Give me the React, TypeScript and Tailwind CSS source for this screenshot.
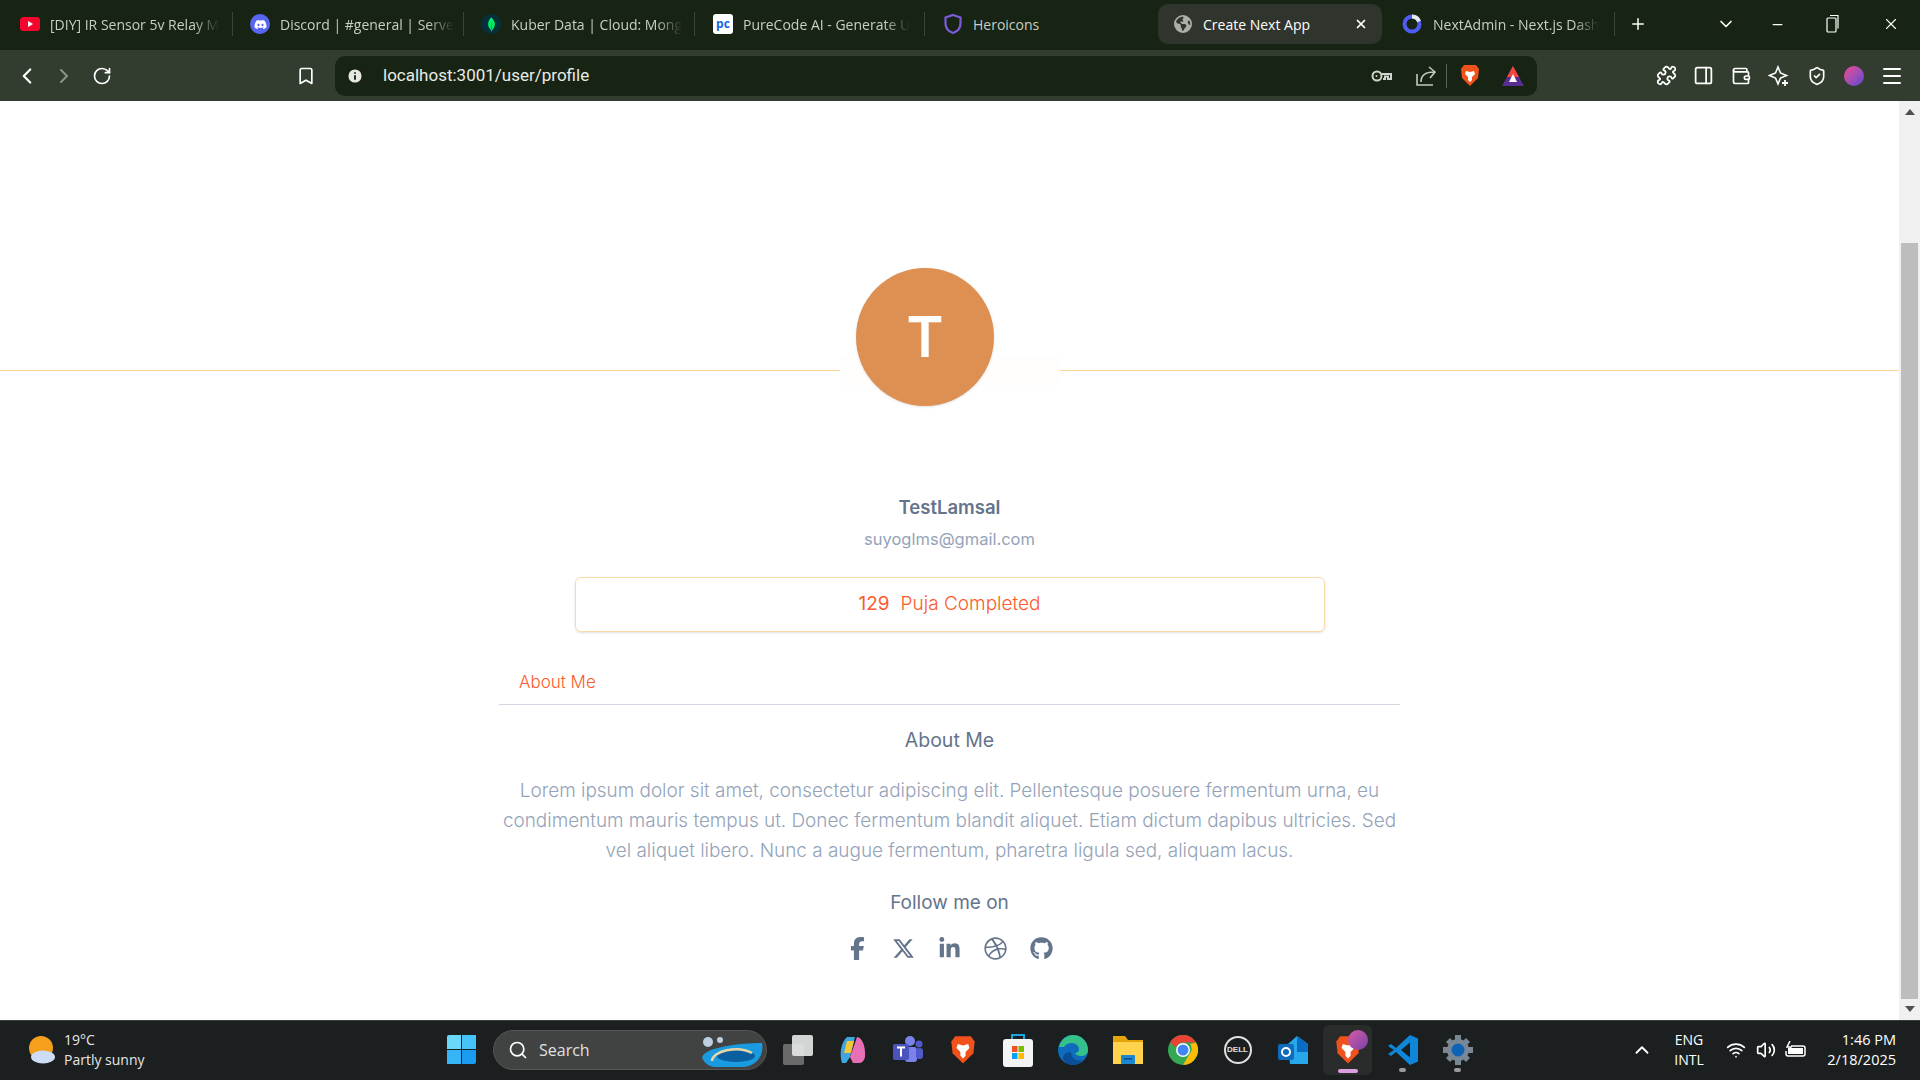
import React from "react";
import {
  ChevronLeft,
  ChevronRight,
  RotateCw,
  Bookmark,
  Puzzle,
  PanelRight,
  Wallet,
  ShieldCheck,
  Menu,
  Plus,
  ChevronDown,
  Minus,
  X,
  Search,
  ChevronUp,
  Wifi,
  Volume2,
  Info,
} from "lucide-react";
import { FaDiscord, FaFacebookF, FaGithub, FaLinkedinIn, FaDribbble, FaXTwitter, FaEarthAmericas } from "react-icons/fa6";
import { SiMongodb } from "react-icons/si";

const Youtube = () => (
  <svg width="20" height="14" viewBox="0 0 20 14">
    <rect width="20" height="14" rx="3.500" fill="#f4072f" />
    <path d="M8 4l5 3-5 3z" fill="#fff" />
  </svg>
);

const Discord = () => (
  <div className="w-[20px] h-[20px] rounded-full bg-[#5865f2] flex items-center justify-center">
    <FaDiscord size={13} className="text-white" />
  </div>
);

const Mongo = () => (
  <div className="w-[20px] h-[20px] rounded-full bg-[#03303a] flex items-center justify-center">
    <SiMongodb size={15} className="text-[#00ed64]" />
  </div>
);

const PureCode = () => (
  <div className="w-[20px] h-[20px] rounded-[3px] bg-white flex items-center justify-center text-[12px] leading-none font-bold text-[#1565e0]">
    pc
  </div>
);

const HeroShield = () => (
  <svg width="20" height="22" viewBox="0 0 20 22" fill="none">
    <path d="M10 2l7.500 2.500v6c0 4.500-3 8-7.500 9.500-4.500-1.500-7.500-5-7.500-9.500v-6z" stroke="#7c5cdb" strokeWidth="2.200" />
  </svg>
);

const NextRing = () => (
  <svg width="20" height="20" viewBox="0 0 20 20" fill="none">
    <circle cx="10" cy="10" r="7.500" stroke="#4f5bf0" strokeWidth="4" />
    <path d="M10 2.500a7.500 7.500 0 0 1 7 5" stroke="#e8e8e8" strokeWidth="4" />
  </svg>
);

const BraveLion = ({ size = 20 }: { size?: number }) => (
  <svg width={size} height={size * 1.15} viewBox="0 0 20 23">
    <path d="M4 1h12l3 4-1 9-8 8-8-8-1-9z" fill="#f1511b" />
    <path d="M6 7l4 1 4-1 1 3-3 3v3l-2 2-2-2v-3L5 10z" fill="#fff" />
  </svg>
);

const KeyIcon = () => (
  <svg width="22" height="14" viewBox="0 0 22 14" fill="none" stroke="#d0d4ce" strokeWidth="2">
    <circle cx="6" cy="7" r="4.500" />
    <path d="M10.500 5H20v5h-3V7.500h-3V10h-2" />
    <circle cx="5.500" cy="7" r="1" fill="#d0d4ce" strokeWidth="0" />
  </svg>
);

const ShareIcon = () => (
  <svg width="22" height="22" viewBox="0 0 22 22" fill="none" stroke="#c4c9c2" strokeWidth="1.600">
    <path d="M2 9v11h16" />
    <path d="M6 17c0-6 4-10 13-10M14 2l6 5-5 6" />
  </svg>
);

const StarIcon = () => (
  <svg width="22" height="22" viewBox="0 0 22 22" fill="none" stroke="#fff" strokeWidth="1.600">
    <path d="M10 2l2.500 6 6 2.500-6 2.500L10 19l-2.500-6-6-2.500 6-2.500z" />
    <path d="M17 15v6M14 18h6" strokeWidth="1.800" />
  </svg>
);

const RestoreIcon = () => (
  <svg width="14" height="20" viewBox="0 0 14 20" fill="none" stroke="#fff" strokeWidth="1.200">
    <rect x="1" y="4" width="9" height="14" rx="1" />
    <path d="M4 1.500h8v13" />
  </svg>
);

const BatteryIcon = () => (
  <svg width="22" height="18" viewBox="0 0 22 18" fill="none" stroke="#fff" strokeWidth="1.500">
    <path d="M6 5h12a2 2 0 0 1 2 2v6a2 2 0 0 1-2 2H3a2 2 0 0 1-2-2v-3" />
    <rect x="3" y="7" width="15" height="6" fill="#fff" strokeWidth="0" />
    <path d="M5 0L2 6h4l-2 4" strokeWidth="1.500" />
  </svg>
);

const tabs = [
  { title: "[DIY] IR Sensor 5v Relay M", icon: <Youtube />, pad: "pl-[20px] w-[233px]" },
  { title: "Discord | #general | Serve", icon: <Discord />, pad: "pl-[17px] w-[231px]" },
  { title: "Kuber Data | Cloud: Mong", icon: <Mongo />, pad: "pl-[17px] w-[231px]" },
  { title: "PureCode AI - Generate U", icon: <PureCode />, pad: "pl-[18px] w-[230px]" },
];

const SocialIcons = [FaFacebookF, FaXTwitter, FaLinkedinIn, FaDribbble, FaGithub];

const TabBar = () => (
  <div className="h-[50px] pb-[2px] bg-[#172413] flex items-center text-[14px] text-[#c8cdc6] shrink-0">
    {tabs.map((t) => (
      <div key={t.title} className={`${t.pad} flex items-center gap-[10px] h-[24px] border-r border-[#3a4537] shrink-0`}>
        <span className="w-[20px] flex justify-center shrink-0">{t.icon}</span>
        <span className="whitespace-nowrap [mask-image:linear-gradient(to_right,black_85%,transparent)]">{t.title}</span>
      </div>
    ))}
    <div className="pl-[18px] w-[233px] flex items-center gap-[10px] shrink-0">
      <HeroShield />
      <span>Heroicons</span>
    </div>
    <div className="w-[224px] h-[40px] rounded-[10px] bg-[#2f352d] flex items-center pl-[16px] pr-[14px] gap-[11px] text-white shrink-0">
      <FaEarthAmericas size={18} className="text-[#aab0a8]" />
      <span>Create Next App</span>
      <X size={14} strokeWidth={3} className="ml-auto" />
    </div>
    <div className="ml-[20px] flex items-center gap-[11px] w-[213px] h-[24px] border-r border-[#3a4537] shrink-0">
      <NextRing />
      <span className="whitespace-nowrap [mask-image:linear-gradient(to_right,black_85%,transparent)]">NextAdmin - Next.js Dash</span>
    </div>
    <Plus size={18} className="ml-[14px] text-white" />
    <ChevronDown size={20} className="ml-[69px] text-white" />
    <Minus size={15} className="ml-[34px] text-white" />
    <span className="ml-[41px]"><RestoreIcon /></span>
    <X size={18} strokeWidth={1.500} className="ml-[42px] text-white" />
  </div>
);

const ToolBar = () => (
  <div className="h-[51px] bg-[#323d2f] flex items-center shrink-0 text-white">
    <ChevronLeft size={26} strokeWidth={2} className="ml-[14px]" />
    <ChevronRight size={24} strokeWidth={2} className="ml-[12px] text-[#8b9388]" />
    <RotateCw size={20} strokeWidth={2} className="ml-[16px]" />
    <Bookmark size={20} strokeWidth={2} className="ml-[184px]" />
    <div className="ml-[19px] w-[1202px] h-[40px] rounded-[10px] bg-[#172413] flex items-center pl-[11px] shrink-0">
      <Info size={18} fill="#e8e8e2" stroke="#172413" strokeWidth={2.500} />
      <span className="ml-[19px] text-[17px] text-[#e8ebe6] font-['Roboto',sans-serif]">localhost:3001/user/profile</span>
      <span className="ml-auto"><KeyIcon /></span>
      <span className="ml-[22px]"><ShareIcon /></span>
      <div className="ml-[9px] w-[1px] h-[24px] bg-[#59625a]" />
      <span className="ml-[13px]"><BraveLion /></span>
      <svg className="ml-[22px] mr-[13px]" width="22" height="20" viewBox="0 0 22 20">
        <path d="M11 0l11 20H0z" fill="#5a2d91" />
        <path d="M11 0l6 11H5z" fill="#f0463c" />
        <path d="M11 8l4 8H7z" fill="#fff" />
      </svg>
    </div>
    <Puzzle size={21} className="ml-[119px]" />
    <PanelRight size={21} className="ml-[16px]" />
    <Wallet size={20} className="ml-[17px]" />
    <span className="ml-[17px]"><StarIcon /></span>
    <ShieldCheck size={20} className="ml-[17px]" />
    <div className="ml-[17px] w-[20px] h-[20px] rounded-full bg-gradient-to-br from-[#f23f8d] to-[#5b3fd1]" />
    <Menu size={24} className="ml-[16px]" />
  </div>
);

const Scrollbar = () => (
  <div className="w-[21px] bg-[#f0f0f0] flex flex-col items-center shrink-0">
    <svg className="mt-[8px]" width="10" height="6" viewBox="0 0 10 6"><path d="M5 0l5 6H0z" fill="#505050" /></svg>
    <div className="mt-[128px] w-[17px] h-[756px] bg-[#bdbdbd]" />
    <svg className="mt-[7px]" width="10" height="6" viewBox="0 0 10 6"><path d="M5 6L0 0h10z" fill="#505050" /></svg>
  </div>
);

const Profile = () => (
  <div className="flex-1 bg-white relative font-['Inter',sans-serif] flex flex-col items-center">
    <div className="w-full h-[270px] border-b border-[#fdd69e] shrink-0" />
    <div className="absolute left-[840px] top-[255px] w-[220px] h-[30px] bg-[#fffefd]" />
    <div className="absolute left-[856px] top-[167px] w-[138px] h-[138px] rounded-full bg-[#de8f52] shadow-sm flex items-center justify-center text-white text-[56px] font-semibold">
      T
    </div>
    <h2 className="mt-[122px] text-[18.500px] leading-[28px] font-semibold text-[#64748b]">TestLamsal</h2>
    <p className="mt-[4px] text-[16.500px] leading-[28px] font-normal text-[#94a3b8]">suyoglms@gmail.com</p>
    <div className="mt-[24px] w-[750px] h-[55px] rounded-[6px] border border-[#fdd9a8] shadow-sm flex items-center justify-center gap-[11px] text-[19px] text-[#fb5a2d] font-light">
      <span className="font-normal">129</span>
      <span>Puja Completed</span>
    </div>
    <div className="mt-[35px] w-[901px] border-b border-[#d5d8e3] h-[38px] pt-[1px] pl-[20px] text-[17px] leading-[28px] text-[#fb5a2d] font-light">
      About Me
    </div>
    <h3 className="mt-[21px] text-[19.500px] leading-[28px] font-normal text-[#64748b]">About Me</h3>
    <p className="mt-[22px] w-[901px] text-center text-[18.930px] leading-[30px] text-[#94a3b8] font-light">
      Lorem ipsum dolor sit amet, consectetur adipiscing elit. Pellentesque posuere fermentum urna, eu condimentum mauris tempus ut. Donec fermentum blandit aliquet. Etiam dictum dapibus ultricies. Sed vel aliquet libero. Nunc a augue fermentum, pharetra ligula sed, aliquam lacus.
    </p>
    <p className="mt-[23px] text-[19px] leading-[28px] font-normal text-[#64748b]">Follow me on</p>
    <div className="mt-[19px] flex gap-[22px] text-[#64748b]">
      {SocialIcons.map((Icon, i) => (
        <span key={i} className="w-[24px] h-[24px] flex items-center justify-center">
          <Icon size={23} />
        </span>
      ))}
    </div>
  </div>
);

const appIcons: React.ReactNode[] = [
  <div key="tv" className="relative w-[30px] h-[30px]">
    <div className="absolute left-0 bottom-0 w-[21px] h-[21px] rounded-[2px] bg-[#6a6a6a]" />
    <div className="absolute right-0 top-0 w-[21px] h-[21px] rounded-[2px] bg-[#e8e8e8]/90" />
  </div>,
  <svg key="copilot" width="30" height="32" viewBox="0 0 30 32">
    <path d="M9 3h8l-5 20-4 6H4C1 20 3 8 9 3z" fill="#3fa6e0" />
    <path d="M19 3c5 0 9 10 8 20-1 4-3 6-6 6h-6l-3-6 6-17z" fill="#e86fb5" />
    <path d="M9 7h7l-3 12H6z" fill="#f2c83a" />
  </svg>,
  <svg key="teams" width="32" height="30" viewBox="0 0 32 30">
    <circle cx="18" cy="6" r="5" fill="#7b83eb" /><circle cx="27" cy="9" r="3.500" fill="#5059c9" />
    <rect x="13" y="12" width="12" height="15" rx="3" fill="#7b83eb" /><rect x="24" y="13" width="7" height="11" rx="3" fill="#5059c9" />
    <rect x="1" y="9" width="16" height="16" rx="2" fill="#4b53bc" />
    <path d="M5 12.500h8M9 12.500v9" stroke="#fff" strokeWidth="2" />
  </svg>,
  <BraveLion key="brave" size={26} />,
  <svg key="store" width="30" height="34" viewBox="0 0 30 34">
    <path d="M9 7V2h12v5" fill="none" stroke="#1aa5e6" strokeWidth="2" />
    <rect y="6" width="30" height="28" rx="3" fill="#f4f4f4" />
    <rect x="9" y="13" width="5.500" height="6" fill="#f25022" /><rect x="15.500" y="13" width="5.500" height="6" fill="#7fba00" />
    <rect x="9" y="20" width="5.500" height="6" fill="#00a4ef" /><rect x="15.500" y="20" width="5.500" height="6" fill="#ffb900" />
  </svg>,
  <svg key="edge" width="30" height="30" viewBox="0 0 30 30">
    <circle cx="15" cy="15" r="15" fill="#0f6cbd" />
    <path d="M1 12C3 4 9 0 15 0c8 0 15 6 15 15 0 4-3 6-7 6-3 0-5-1-6-3 4 0 5-4 3-7-3-4-11-4-14 1" fill="#35c18a" />
    <path d="M13 17c0 6 5 10 12 8-3 3-6 5-10 5-4 0-8-2-10-6 0-4 2-7 8-7z" fill="#0a4f96" />
  </svg>,
  <svg key="files" width="30" height="30" viewBox="0 0 30 30">
    <path d="M0 1h12l3 4h15v24H0z" fill="#e5a50a" />
    <rect y="7" width="30" height="22" fill="#ffd34e" />
    <rect x="8" y="20" width="14" height="9" rx="1" fill="#1c86d1" />
    <rect x="11" y="23" width="8" height="1.500" fill="#0b4f86" />
  </svg>,
  <svg key="chrome" width="30" height="30" viewBox="0 0 30 30">
    <circle cx="15" cy="15" r="15" fill="#34a853" />
    <path d="M15 0a15 15 0 0 1 13 7.500H15a7.500 7.500 0 0 0-7 5L2 7.500A15 15 0 0 1 15 0z" fill="#ea4335" />
    <path d="M28 7.500A15 15 0 0 1 15 30l6.500-11A7.500 7.500 0 0 0 22 9z" fill="#fbbc05" />
    <circle cx="15" cy="15" r="7" fill="#fff" /><circle cx="15" cy="15" r="5.500" fill="#4285f4" />
  </svg>,
  <div key="dell" className="w-[28px] h-[28px] rounded-full border-2 border-[#e0e0e0] flex items-center justify-center text-[8px] font-bold text-[#e0e0e0] font-['Liberation_Sans',sans-serif]">
    DELL
  </div>,
  <svg key="outlook" width="30" height="30" viewBox="0 0 30 30">
    <path d="M10 9l9-8 11 8v20H12z" fill="#28a8ea" /><path d="M19 1l11 8v8H19z" fill="#0a6cc4" />
    <rect y="9" width="16" height="16" rx="2" fill="#0f6cbd" />
    <circle cx="8" cy="17" r="4" fill="none" stroke="#fff" strokeWidth="2" />
  </svg>,
  <div key="active" className="relative w-[49px] h-[50px] rounded-[6px] bg-[#2a2c2b] flex items-center justify-center">
    <BraveLion size={26} />
    <div className="absolute right-[4px] top-[5px] w-[20px] h-[20px] rounded-full bg-gradient-to-br from-[#d85aa5] to-[#7a3fa8]" />
    <div className="absolute bottom-[2px] w-[20px] h-[4px] rounded-full bg-[#d99fe0]" />
  </div>,
  <div key="vs" className="relative w-[30px] h-[40px] flex items-center justify-center">
    <svg width="30" height="30" viewBox="0 0 30 30">
      <path d="M22 0l8 3.500v23L22 30 8 17l-5 4-3-2 6-4-6-4 3-2 5 4z" fill="#0e87d8" />
      <path d="M22 7.500L13 15l9 7.500z" fill="#1c1f20" />
    </svg>
    <div className="absolute -bottom-[2px] w-[7px] h-[4px] rounded-full bg-[#9a9a9a]" />
  </div>,
  <div key="gear" className="relative w-[30px] h-[40px] flex items-center justify-center">
    <svg width="30" height="30" viewBox="0 0 30 30">
      <circle cx="15" cy="15" r="11" fill="#7a8794" />
      <path d="M12 0h6v6h-6zM12 24h6v6h-6zM0 12h6v6H0zM24 12h6v6h-6zM3 7l4-4 4 4-4 4zM19 23l4-4 4 4-4 4zM23 3l4 4-4 4-4-4zM7 19l4 4-4 4-4-4z" fill="#7a8794" />
      <circle cx="15" cy="15" r="6.500" fill="#0f63b5" />
    </svg>
    <div className="absolute -bottom-[2px] w-[7px] h-[4px] rounded-full bg-[#9a9a9a]" />
  </div>,
];

const Taskbar = () => (
  <div className="h-[60px] pb-[2px] bg-[#1c1f20] border-t border-[#3a3c3d] flex items-center shrink-0 text-white font-['Open_Sans',sans-serif]">
    <svg className="ml-[28px]" width="28" height="28" viewBox="0 0 28 28">
      <ellipse cx="13" cy="12" rx="12" ry="12" fill="#f4a01d" />
      <ellipse cx="15" cy="21" rx="12" ry="6.500" fill="#cfdcf5" />
    </svg>
    <div className="ml-[8px] w-[383px] text-[14px] leading-[20px] text-[#e6e6e6]">
      <p>19°C</p>
      <p>Partly sunny</p>
    </div>
    <div className="grid grid-cols-2 gap-[1px] w-[29px] h-[29px] shrink-0">
      <div className="bg-[#69d8fb] rounded-tl-[2px]" />
      <div className="bg-[#44c4f8]" />
      <div className="bg-[#35b5f5]" />
      <div className="bg-[#1a9df0] rounded-br-[2px]" />
    </div>
    <div className="ml-[17px] w-[274px] h-[40px] rounded-full bg-[#414343] border border-[#555] flex items-center pl-[14px] relative text-[#e0e0e0] text-[16px] shrink-0">
      <Search size={20} className="text-white" />
      <span className="ml-[11px]">Search</span>
      <svg className="absolute right-[2px] top-[6px]" width="64" height="30" viewBox="0 0 64 30">
        <path d="M2 20C6 10 40 6 62 6c2 8-2 22-18 24H14C8 29 3 25 2 20z" fill="#1a9be0" />
        <ellipse cx="36" cy="19" rx="19" ry="6" fill="#0a5fa0" />
        <path d="M12 24c0-10 26-16 40-8" stroke="#e8d6a8" strokeWidth="2.500" fill="none" />
        <circle cx="8" cy="5" r="5" fill="#bcd0e0" /><circle cx="20" cy="3" r="3" fill="#bcd0e0" />
      </svg>
    </div>
    <div className="ml-[3px] flex items-center shrink-0">
      {appIcons.map((icon, i) => (
        <div key={i} className="w-[55px] h-[56px] flex items-center justify-center">
          {icon}
        </div>
      ))}
    </div>
    <ChevronUp size={22} className="ml-[146px]" />
    <div className="ml-[16px] w-[40px] text-center text-[14px] leading-[20px]">
      <p>ENG</p>
      <p>INTL</p>
    </div>
    <Wifi size={20} className="ml-[17px]" />
    <Volume2 size={20} className="ml-[10px]" />
    <span className="ml-[9px]"><BatteryIcon /></span>
    <div className="ml-auto mr-[24px] text-right text-[14.500px] leading-[20px]">
      <p>1:46 PM</p>
      <p>2/18/2025</p>
    </div>
  </div>
);

const App: React.FC = () => {
  return (
    <div className="h-screen w-full flex flex-col overflow-hidden font-['Open_Sans',sans-serif]">
      <TabBar />
      <ToolBar />
      <div className="flex-1 flex min-h-0">
        <Profile />
        <Scrollbar />
      </div>
      <Taskbar />
    </div>
  );
};

export default App;
